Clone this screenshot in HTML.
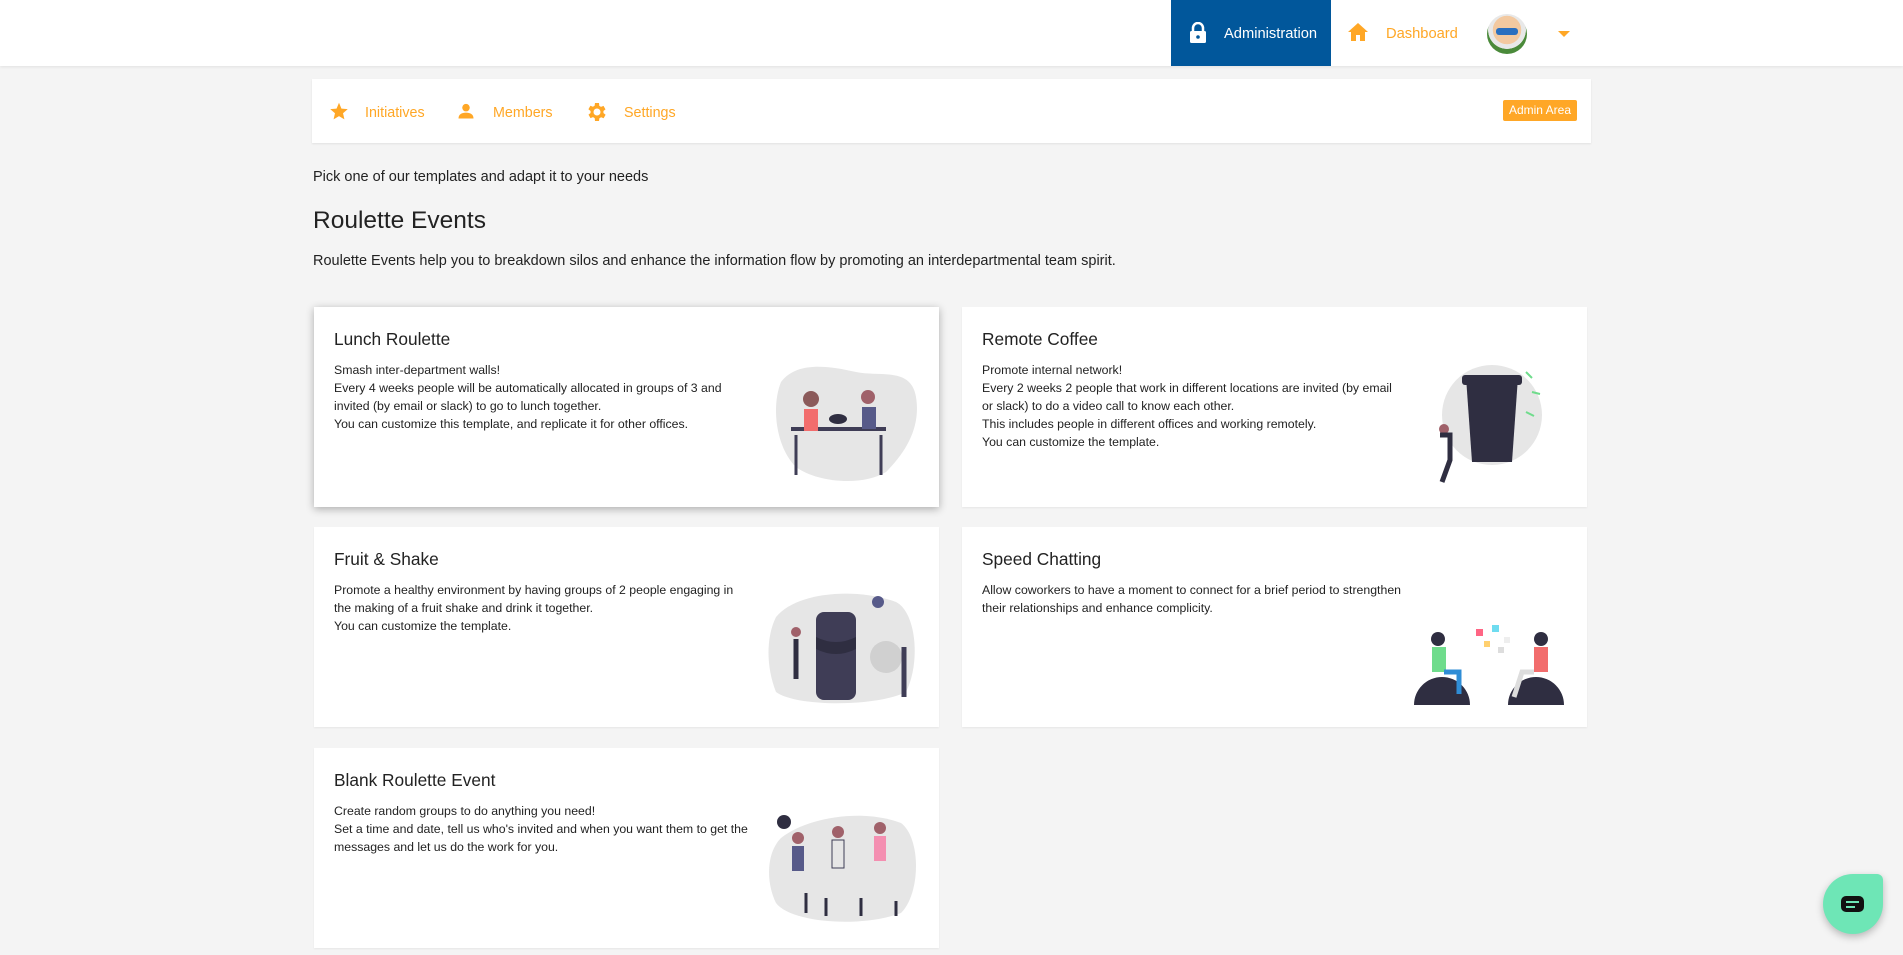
<!DOCTYPE html>
<html><head><meta charset="utf-8"><style>
*{box-sizing:border-box;margin:0;padding:0}
body{width:1903px;height:955px;background:#f4f4f4;font-family:"Liberation Sans",Arial,sans-serif;color:#222;position:relative;overflow:hidden}
.hdr{position:absolute;left:0;top:0;width:1903px;height:66px;background:#fff;box-shadow:0 1px 3px rgba(0,0,0,.08)}
.abs{position:absolute}
.admin{left:1171px;top:0;width:160px;height:66px;background:#01579b;color:#fff;font-size:14.7px}
.or{color:#ffa726}
.sub{left:312px;top:79px;width:1279px;height:64px;background:#fff;box-shadow:0 1px 2px rgba(0,0,0,.08)}
.nav{font-size:14.3px;color:#ffa726;top:105px}
.card{position:absolute;background:#fff;width:625px;height:200px;box-shadow:0 1px 2px rgba(0,0,0,.06)}
.card h3{position:absolute;left:20px;top:22px;font-size:17.3px;font-weight:normal;color:#222}
.card p{position:absolute;left:20px;top:54px;width:420px;font-size:12.3px;line-height:18px;color:#222}
.card svg{position:absolute;left:452px;top:50px}
</style></head><body>
<div class="hdr"></div>
<div class="abs admin">
<svg class="abs" style="left:18px;top:22px" width="18" height="22" viewBox="0 0 18 22"><path d="M4 9V6a5 5 0 0110 0v3" stroke="#fff" stroke-width="2.5" fill="none"/><rect x="1" y="9" width="16" height="12" rx="1.5" fill="#fff"/><circle cx="9" cy="15" r="1.8" fill="#01579b"/></svg>
<span class="abs" style="left:53px;top:26px">Administration</span></div>
<svg class="abs" style="left:1348px;top:23px" width="20" height="18" viewBox="0 0 20 18"><path d="M10 0L0 9h3v9h5v-6h4v6h5V9h3z" fill="#ffa726"/></svg>
<span class="abs or" style="left:1386px;top:26px;font-size:14.7px">Dashboard</span>
<div class="abs" style="left:1487px;top:14px;width:40px;height:40px;border-radius:50%;background:radial-gradient(circle at 50% 40%,#f3c9a0 0 45%,#e8e8e8 46% 60%,#4a8a3a 61%)"><div class="abs" style="left:9px;top:14px;width:22px;height:7px;background:#2a6fbf;border-radius:3px"></div></div>
<div class="abs" style="left:1558px;top:31px;border-left:6px solid transparent;border-right:6px solid transparent;border-top:6px solid #ffa726"></div>

<div class="abs sub"></div>
<svg class="abs" style="left:328px;top:101px" width="22" height="21" viewBox="0 0 24 24"><path d="M12 17.3l6.2 3.7-1.6-7 5.4-4.7-7.2-.6L12 2 9.2 8.7 2 9.3l5.4 4.7-1.6 7z" fill="#ffa726"/></svg>
<span class="abs nav" style="left:365px">Initiatives</span>
<svg class="abs" style="left:455px;top:101px" width="22" height="20" viewBox="0 0 24 24"><circle cx="12" cy="8" r="4.5" fill="#ffa726"/><path d="M3 21c0-5 4-7 9-7s9 2 9 7z" fill="#ffa726"/></svg>
<span class="abs nav" style="left:493px">Members</span>
<svg class="abs" style="left:585px;top:100px" width="24" height="24" viewBox="0 0 24 24"><path fill="#ffa726" d="M19.4 13a7.5 7.5 0 000-2l2.1-1.6-2-3.5-2.5 1a7 7 0 00-1.7-1L15 3h-4l-.4 2.7a7 7 0 00-1.7 1l-2.5-1-2 3.5L6.6 11a7.5 7.5 0 000 2l-2.1 1.6 2 3.5 2.5-1a7 7 0 001.7 1L11 21h4l.4-2.7a7 7 0 001.7-1l2.5 1 2-3.5zM13 15.5a3.5 3.5 0 110-7 3.5 3.5 0 010 7z" transform="translate(-1 0)"/></svg>
<span class="abs nav" style="left:624px">Settings</span>
<div class="abs" style="left:1503px;top:100px;width:74px;height:21px;background:#ffa726;color:#fff;font-size:12px;line-height:21px;text-align:center;border-radius:2px">Admin Area</div>

<div class="abs" style="left:313px;top:169px;font-size:14.5px">Pick one of our templates and adapt it to your needs</div>
<div class="abs" style="left:313px;top:207px;font-size:24.5px">Roulette Events</div>
<div class="abs" style="left:313px;top:253px;font-size:14.5px">Roulette Events help you to breakdown silos and enhance the information flow by promoting an interdepartmental team spirit.</div>

<div class="card" style="left:314px;top:307px;box-shadow:0 2px 8px rgba(0,0,0,.3)"><h3>Lunch Roulette</h3><p>Smash inter-department walls!<br>Every 4 weeks people will be automatically allocated in groups of 3 and invited (by email or slack) to go to lunch together.<br>You can customize this template, and replicate it for other offices.</p>
<svg width="155" height="130" viewBox="0 0 155 130"><path d="M15 25C30 5 60 8 90 15c25 5 55-5 60 25s-10 55-30 75c-25 15-70 10-90-5C10 90 5 50 15 25z" fill="#e6e6e6"/><rect x="25" y="70" width="95" height="4" fill="#3f3d56"/><circle cx="45" cy="42" r="8" fill="#8b5a5a"/><rect x="38" y="52" width="14" height="22" fill="#f26d6d"/><circle cx="102" cy="40" r="7" fill="#a0616a"/><rect x="96" y="50" width="14" height="22" fill="#575a89"/><ellipse cx="72" cy="62" rx="9" ry="5" fill="#2f2e41"/><path d="M30 78v40M115 78v40" stroke="#3f3d56" stroke-width="3"/></svg></div>

<div class="card" style="left:962px;top:307px"><h3>Remote Coffee</h3><p>Promote internal network!<br>Every 2 weeks 2 people that work in different locations are invited (by email<br>or slack) to do a video call to know each other.<br>This includes people in different offices and working remotely.<br>You can customize the template.</p>
<svg width="155" height="135" viewBox="0 0 155 135"><circle cx="78" cy="58" r="50" fill="#e6e6e6"/><path d="M52 20h52l-6 85H58z" fill="#2f2e41"/><rect x="48" y="18" width="60" height="10" rx="3" fill="#2f2e41"/><path d="M112 15l6 6M118 35l8 2M112 55l8 4" stroke="#6fdc8c" stroke-width="2"/><circle cx="30" cy="72" r="5" fill="#a0616a"/><path d="M26 78h10v25l-8 22" stroke="#2f2e41" stroke-width="5" fill="none"/></svg></div>

<div class="card" style="left:314px;top:527px"><h3>Fruit &amp; Shake</h3><p>Promote a healthy environment by having groups of 2 people engaging in<br>the making of a fruit shake and drink it together.<br>You can customize the template.</p>
<svg width="155" height="135" viewBox="0 0 155 135"><path d="M10 40c20-25 80-30 120-15 20 10 25 60 10 90-30 15-110 15-130 0C0 90 0 60 10 40z" fill="#e6e6e6"/><rect x="50" y="35" width="40" height="88" rx="8" fill="#3f3d56"/><path d="M50 60q20 10 40 0v12q-20 10-40 0z" fill="#2f2e41"/><circle cx="120" cy="80" r="16" fill="#d0d0d0"/><circle cx="112" cy="25" r="6" fill="#575a89"/><circle cx="30" cy="55" r="5" fill="#a0616a"/><path d="M30 62v40" stroke="#2f2e41" stroke-width="5"/><path d="M138 70v50" stroke="#3f3d56" stroke-width="5"/></svg></div>

<div class="card" style="left:962px;top:527px"><h3>Speed Chatting</h3><p>Allow coworkers to have a moment to connect for a brief period to strengthen<br>their relationships and enhance complicity.</p>
<svg width="155" height="135" viewBox="0 0 155 135"><path d="M0 128a28 28 0 0156 0zM94 128a28 28 0 0156 0z" fill="#2f2e41"/><circle cx="24" cy="62" r="7" fill="#2f2e41"/><rect x="18" y="70" width="14" height="25" fill="#6fdc8c"/><path d="M30 95h15v22" stroke="#2f8dd6" stroke-width="5" fill="none"/><circle cx="127" cy="62" r="7" fill="#2f2e41"/><rect x="120" y="70" width="14" height="25" fill="#f26d6d"/><path d="M120 95h-12l-8 25" stroke="#ddd" stroke-width="5" fill="none"/><rect x="62" y="52" width="7" height="7" fill="#ff6584"/><rect x="78" y="48" width="7" height="7" fill="#6fdcf0"/><rect x="90" y="60" width="6" height="6" fill="#eee"/><rect x="70" y="64" width="6" height="6" fill="#ffd06f"/><rect x="84" y="70" width="6" height="6" fill="#ddd"/></svg></div>

<div class="card" style="left:314px;top:748px"><h3>Blank Roulette Event</h3><p>Create random groups to do anything you need!<br>Set a time and date, tell us who's invited and when you want them to get the<br>messages and let us do the work for you.</p>
<svg width="155" height="130" viewBox="0 0 155 130"><path d="M15 40c25-20 80-30 120-15 20 15 20 70 0 90-40 15-110 10-125-10C0 85 0 55 15 40z" fill="#e6e6e6"/><circle cx="18" cy="24" r="7" fill="#2f2e41"/><circle cx="32" cy="40" r="6" fill="#a0616a"/><rect x="26" y="48" width="12" height="25" fill="#575a89"/><circle cx="72" cy="34" r="6" fill="#a0616a"/><rect x="66" y="42" width="12" height="28" fill="#e6e6e6" stroke="#3f3d56"/><circle cx="114" cy="30" r="6" fill="#a0616a"/><rect x="108" y="38" width="12" height="25" fill="#f48fb1"/><path d="M40 115v-20M60 118v-18M95 118v-18M130 118v-15" stroke="#2f2e41" stroke-width="3"/></svg></div>

<div class="abs" style="left:1823px;top:874px;width:60px;height:60px;background:#6ee6b6;border-radius:50% 6px 50% 50%;box-shadow:0 3px 8px rgba(0,0,0,.25)">
<div class="abs" style="left:18px;top:22px;width:23px;height:16px;border:3px solid #111;border-radius:5px;background:#111"><div class="abs" style="left:2px;top:2px;width:13px;height:2px;background:#6ee6b6"></div><div class="abs" style="left:2px;top:7px;width:9px;height:2px;background:#6ee6b6"></div></div></div>
</body></html>
